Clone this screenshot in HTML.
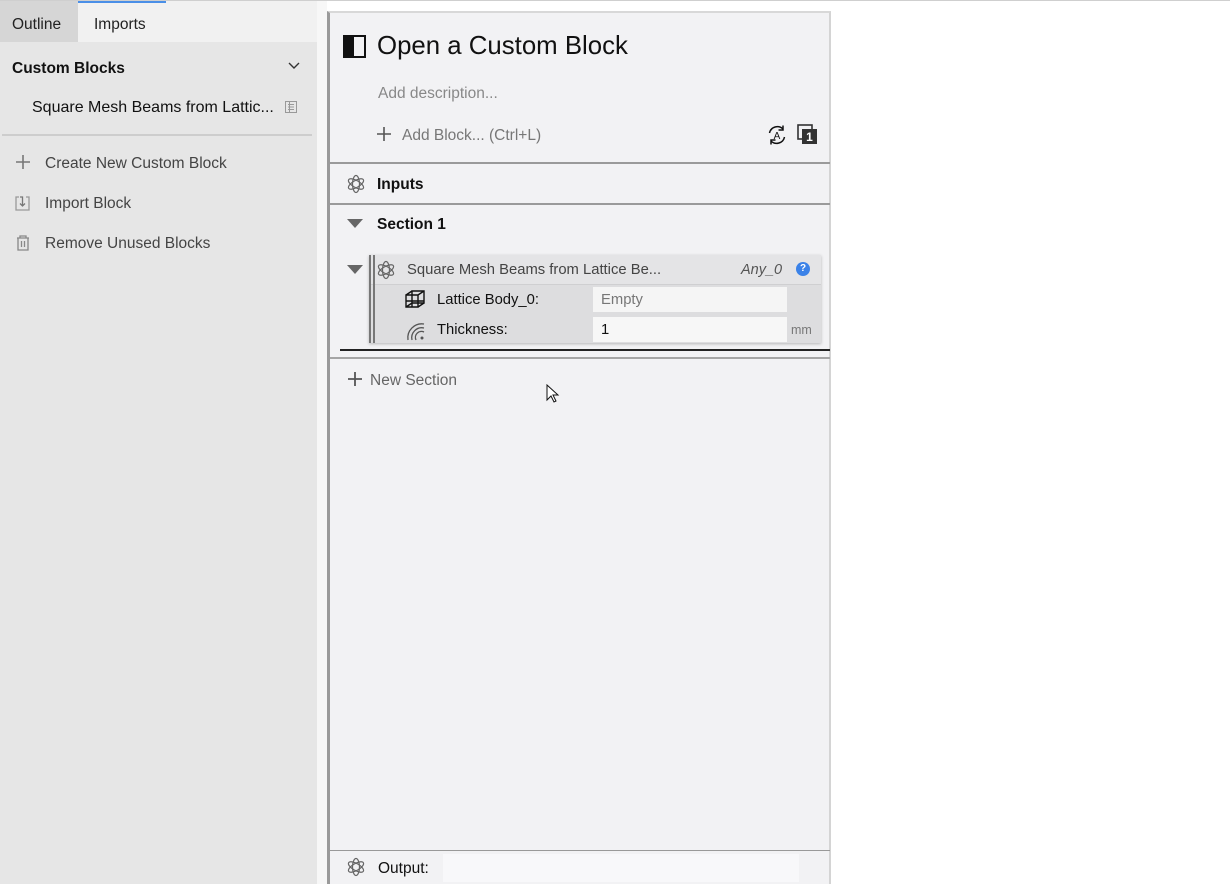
<!DOCTYPE html>
<html><head><style>
*{margin:0;padding:0;box-sizing:border-box}
body{width:1230px;height:884px;background:#fff;font-family:"Liberation Sans",Arial,sans-serif;position:relative;overflow:hidden;color:#111}
.a{position:absolute}
.atom{width:20px;height:20px}
</style></head><body>
<div class="a" style="left:0;top:0;width:1230px;height:1px;background:#cfcfcf"></div>
<div class="a" style="left:0;top:1px;width:317px;height:883px;background:#e6e6e6"></div>
<div class="a" style="left:0;top:1px;width:317px;height:41px;background:#f1f1f1"></div>
<div class="a" style="left:0;top:1px;width:78px;height:41px;background:#d6d6d6"></div>
<div class="a" style="left:78px;top:1px;width:88px;height:2px;background:#4a8fe7"></div>
<div class="a" style="left:12px;top:16px;font-size:15.5px;color:#222">Outline</div>
<div class="a" style="left:94px;top:16px;font-size:15.5px;color:#222">Imports</div>
<div class="a" style="left:12px;top:60px;font-size:15.5px;font-weight:bold;color:#111">Custom Blocks</div>
<svg class="a" style="left:287px;top:61px" width="14" height="10"><path d="M2 2l5 5 5-5" fill="none" stroke="#333" stroke-width="1.4"/></svg>
<div class="a" style="left:32px;top:99px;font-size:16px;color:#111">Square Mesh Beams from Lattic...</div>
<svg class="a" style="left:284px;top:100px" width="14" height="14"><rect x="1.5" y="1.5" width="11" height="11" fill="none" stroke="#999"/><path d="M4 4.5h6M4 7h6M4 9.5h6M5.5 2v11" stroke="#999"/></svg>
<div class="a" style="left:2px;top:134px;width:310px;height:2px;background:#cdcdcd"></div>
<svg class="a" style="left:15px;top:154px" width="16" height="16"><path d="M8 1v14M1 8h14" stroke="#777" stroke-width="1.6"/></svg>
<div class="a" style="left:45px;top:155px;font-size:15.5px;color:#444">Create New Custom Block</div>
<svg class="a" style="left:14px;top:194px" width="18" height="18"><path d="M5 3H2v13h13V3h-3" fill="none" stroke="#999" stroke-width="1.3"/><path d="M8.5 5v7M6 9.5l2.5 2.5 2.5-2.5M6 3h2.5v2" fill="none" stroke="#777" stroke-width="1.3"/></svg>
<div class="a" style="left:45px;top:195px;font-size:15.5px;color:#444">Import Block</div>
<svg class="a" style="left:14px;top:234px" width="18" height="18"><path d="M3 4h12M6 4V2h6v2M4 4v12h10V4M7.5 7v6M10.5 7v6" fill="none" stroke="#888" stroke-width="1.3"/></svg>
<div class="a" style="left:45px;top:235px;font-size:15.5px;color:#444">Remove Unused Blocks</div>
<div class="a" style="left:317px;top:1px;width:10px;height:883px;background:#f7f7f7"></div>
<div class="a" style="left:327px;top:11px;width:504px;height:873px;background:#f2f2f4;border-left:3px solid #9a9a9a;border-right:2px solid #d4d4d4;border-top:2px solid #d8d8d8"></div>
<svg class="a" style="left:343px;top:35px" width="24" height="24"><rect x="1" y="1" width="21" height="21" fill="none" stroke="#111" stroke-width="2"/><rect x="1" y="1" width="10" height="21" fill="#111"/></svg>
<div class="a" style="left:377px;top:32px;font-size:25.8px;color:#111">Open a Custom Block</div>
<div class="a" style="left:378px;top:85px;font-size:15.5px;color:#888">Add description...</div>
<svg class="a" style="left:376px;top:126px" width="16" height="16"><path d="M8 1v14M1 8h14" stroke="#555" stroke-width="1.6"/></svg>
<div class="a" style="left:402px;top:127px;font-size:15.5px;color:#777">Add Block... (Ctrl+L)</div>
<svg class="a" style="left:766px;top:124px" width="22" height="22"><path d="M3.5 9A8 8 0 0 1 17 5M18.5 13A8 8 0 0 1 5 17" fill="none" stroke="#111" stroke-width="1.5"/><path d="M17 1.5V6h-4.5M5 20.5V16h4.5" fill="none" stroke="#111" stroke-width="1.5"/><text x="11" y="15" font-size="10" text-anchor="middle" font-family="Liberation Sans" fill="#111">A</text></svg>
<svg class="a" style="left:797px;top:124px" width="22" height="22"><rect x="1" y="1" width="14" height="14" fill="none" stroke="#333" stroke-width="1.6"/><rect x="5" y="5" width="15" height="15" fill="#333"/><text x="12.5" y="17" font-size="12" font-weight="bold" text-anchor="middle" font-family="Liberation Sans" fill="#fff">1</text></svg>
<div class="a" style="left:330px;top:162px;width:500px;height:2px;background:#9a9a9a"></div>
<svg class="a atom" style="left:346px;top:174px" viewBox="0 0 20 20"><g fill="none" stroke="#666" stroke-width="1.2"><ellipse cx="10" cy="10" rx="8.5" ry="3.5" transform="rotate(30 10 10)"/><ellipse cx="10" cy="10" rx="8.5" ry="3.5" transform="rotate(90 10 10)"/><ellipse cx="10" cy="10" rx="8.5" ry="3.5" transform="rotate(150 10 10)"/></g></svg>
<div class="a" style="left:377px;top:176px;font-size:15.5px;font-weight:bold;color:#111">Inputs</div>
<div class="a" style="left:330px;top:203px;width:500px;height:2px;background:#9a9a9a"></div>
<svg class="a" style="left:347px;top:219px" width="16" height="10"><path d="M0 0h16L8 9z" fill="#666"/></svg>
<div class="a" style="left:377px;top:216px;font-size:15.5px;font-weight:bold;color:#111">Section 1</div>
<svg class="a" style="left:347px;top:265px" width="16" height="10"><path d="M0 0h16L8 9z" fill="#666"/></svg>
<div class="a" style="left:369px;top:255px;width:452px;height:88px;background:#dddddf;box-shadow:0 1px 3px rgba(0,0,0,.25)"></div>
<div class="a" style="left:369px;top:255px;width:452px;height:30px;background:#e4e4e6;border-bottom:1px solid #cfcfd1"></div>
<div class="a" style="left:369px;top:255px;width:2px;height:88px;background:#777"></div>
<div class="a" style="left:373px;top:255px;width:2px;height:88px;background:#777"></div>
<svg class="a atom" style="left:376px;top:260px" viewBox="0 0 20 20"><g fill="none" stroke="#666" stroke-width="1.2"><ellipse cx="10" cy="10" rx="8.5" ry="3.5" transform="rotate(30 10 10)"/><ellipse cx="10" cy="10" rx="8.5" ry="3.5" transform="rotate(90 10 10)"/><ellipse cx="10" cy="10" rx="8.5" ry="3.5" transform="rotate(150 10 10)"/></g></svg>
<div class="a" style="left:407px;top:262px;font-size:14.8px;color:#444">Square Mesh Beams from Lattice Be...</div>
<div class="a" style="left:741px;top:262px;font-size:14.5px;font-style:italic;color:#555">Any_0</div>
<div class="a" style="left:796px;top:262px;width:14px;height:14px;border-radius:50%;background:#3b82e8;color:#fff;font-size:10px;font-weight:bold;text-align:center;line-height:14px">?</div>
<svg class="a" style="left:404px;top:289px" width="22" height="20"><g fill="none" stroke="#111" stroke-width="1.4"><path d="M2 6h12v12H2zM8 2h12v12H8zM2 6l6-4M14 6l6-4M2 18l6-4M14 18l6-4M2 12h18M8 2v16"/></g></svg>
<div class="a" style="left:437px;top:292px;font-size:14.8px;color:#111">Lattice Body_0:</div>
<div class="a" style="left:593px;top:287px;width:194px;height:25px;background:#f5f5f5"></div>
<div class="a" style="left:601px;top:292px;font-size:14.8px;color:#777">Empty</div>
<svg class="a" style="left:405px;top:319px" width="22" height="22"><g fill="none" stroke="#555" stroke-width="1.3"><path d="M3 21a14 14 0 0 1 16-16"/><path d="M7 21a10 10 0 0 1 12-12"/><path d="M11 21a6 6 0 0 1 8-8"/></g><circle cx="17" cy="19" r="1.5" fill="#555"/></svg>
<div class="a" style="left:437px;top:322px;font-size:14.8px;color:#111">Thickness:</div>
<div class="a" style="left:593px;top:317px;width:194px;height:25px;background:#f7f7f7"></div>
<div class="a" style="left:601px;top:322px;font-size:14.8px;color:#111">1</div>
<div class="a" style="left:791px;top:323px;font-size:12.5px;color:#777">mm</div>
<div class="a" style="left:340px;top:349px;width:490px;height:2px;background:#222"></div>
<div class="a" style="left:330px;top:357px;width:500px;height:2px;background:#a5a5a5"></div>
<svg class="a" style="left:347px;top:371px" width="16" height="16"><path d="M8 1v14M1 8h14" stroke="#555" stroke-width="1.8"/></svg>
<div class="a" style="left:370px;top:372px;font-size:15.5px;color:#666">New Section</div>
<svg class="a" style="left:546px;top:384px" width="14" height="20"><path d="M1 1v15l4-4 3 6 2-1-3-6h5z" fill="#fff" stroke="#111" stroke-width="1"/></svg>
<div class="a" style="left:330px;top:850px;width:500px;height:1px;background:#999"></div>
<svg class="a atom" style="left:346px;top:857px" viewBox="0 0 20 20"><g fill="none" stroke="#666" stroke-width="1.2"><ellipse cx="10" cy="10" rx="8.5" ry="3.5" transform="rotate(30 10 10)"/><ellipse cx="10" cy="10" rx="8.5" ry="3.5" transform="rotate(90 10 10)"/><ellipse cx="10" cy="10" rx="8.5" ry="3.5" transform="rotate(150 10 10)"/></g></svg>
<div class="a" style="left:378px;top:860px;font-size:15.5px;color:#111">Output:</div>
<div class="a" style="left:443px;top:854px;width:356px;height:28px;background:#f8f8fa"></div>
</body></html>
